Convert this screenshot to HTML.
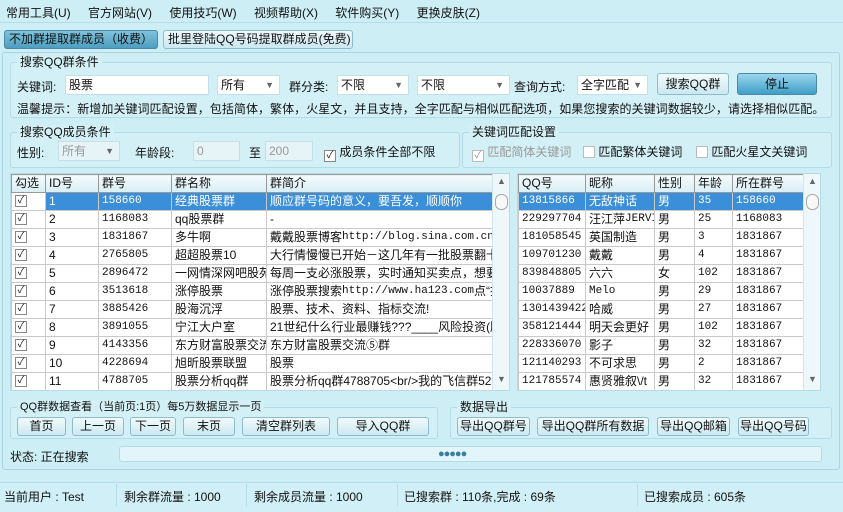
<!DOCTYPE html>
<html><head><meta charset="utf-8"><style>
*{box-sizing:border-box;margin:0;padding:0}
body{width:843px;height:512px;overflow:hidden;background:#cdeef5;font-family:"Liberation Sans","Noto Sans CJK SC",sans-serif;font-size:12px;color:#111;position:relative}
.a{position:absolute;white-space:nowrap}
.grp{position:absolute;border:1px solid #b5dbe6;border-radius:3px;background:#d3f0f6}
.gt{position:absolute;background:#d3f0f6;padding:0 3px;top:-8px;left:6px;line-height:14px}
.inp{position:absolute;background:#fff;border:1px solid #c3e0ea;height:20px;line-height:18px;padding-left:3px}
.sel{position:absolute;background:#fff;border:1px solid #c3e0ea;height:20px;line-height:18px;padding-left:3px}
.sel:after{content:"▼";position:absolute;right:5px;top:0;font-size:9px;color:#666}
.dis{background:#e6f4f8;color:#999}
.btn{position:absolute;border:1px solid #8fbccb;border-radius:3px;background:linear-gradient(#f2fbfd,#cbe8f0);text-align:center;height:19px;line-height:17px}
.cb{display:inline-block;width:12px;height:12px;border:1px solid #888;background:#fff;color:#111;font-size:10px;line-height:10px;text-align:center;vertical-align:-2px}
table{border-collapse:collapse;background:#fff;table-layout:fixed}
tr{height:18px}
td,th{border:1px solid #c9c9c9;height:18px;padding:0 0 0 3px;font-weight:normal;text-align:left;overflow:hidden;white-space:nowrap;font-size:12px;vertical-align:top}
td>div,th>div{height:16px;line-height:16px;overflow:hidden}
td span{vertical-align:top}
td .cb{margin-top:2px;vertical-align:top}
th{background:linear-gradient(#f4fbfd,#d8eef5);border-color:#999}
tr.s td{background:#3a8fd8;color:#fff}
tr.s td:first-child{background:#fff}
.m{font-family:"Liberation Mono","Noto Sans CJK SC",monospace;font-size:11px}
.sb{position:absolute;background:#eef8fb;border-left:1px solid #d0e6ee}
</style></head><body>
<div class="a" style="left:6px;top:4px;word-spacing:14px">常用工具(U) 官方网站(V) 使用技巧(W) 视频帮助(X) 软件购买(Y) 更换皮肤(Z)</div>
<div class="a" style="left:0;top:22px;width:843px;border-top:1px solid #b8dde8"></div>
<div class="a" style="left:4px;top:30px;width:154px;height:19px;border:1px solid #4a88a5;border-radius:3px;background:linear-gradient(#7fc3dd,#4c9ec0);line-height:17px;padding-left:4px">不加群提取群成员（收费）</div>
<div class="a" style="left:163px;top:30px;width:190px;height:19px;border:1px solid #8fbccb;border-radius:3px;background:linear-gradient(#eef9fc,#cbe8f0);line-height:17px;padding-left:4px">批里登陆QQ号码提取群成员(免费)</div>
<div class="a" style="left:2px;top:52px;width:838px;height:418px;border:1px solid #a9d4e0;border-radius:3px"></div>

<div class="grp" style="left:10px;top:62px;width:822px;height:56px"><span class="gt">搜索QQ群条件</span></div>
<div class="a" style="left:17px;top:78px">关键词:</div>
<div class="inp" style="left:65px;top:75px;width:144px">股票</div>
<div class="sel" style="left:217px;top:75px;width:63px">所有</div>
<div class="a" style="left:289px;top:78px">群分类:</div>
<div class="sel" style="left:337px;top:75px;width:72px">不限</div>
<div class="sel" style="left:417px;top:75px;width:93px">不限</div>
<div class="a" style="left:514px;top:78px">查询方式:</div>
<div class="sel" style="left:577px;top:75px;width:71px">全字匹配</div>
<div class="btn" style="left:657px;top:73px;width:72px;height:22px;line-height:20px">搜索QQ群</div>
<div class="btn" style="left:737px;top:73px;width:80px;height:22px;line-height:20px;background:linear-gradient(#9ad6ec,#3f9ec7);border-color:#4a88a5">停止</div>
<div class="a" style="left:17px;top:100px;letter-spacing:0.05px">温馨提示：新增加关键词匹配设置，包括简体，繁体，火星文，并且支持，全字匹配与相似匹配选项，如果您搜索的关键词数据较少，请选择相似匹配。</div>

<div class="grp" style="left:10px;top:132px;width:450px;height:36px"><span class="gt">搜索QQ成员条件</span></div>
<div class="a" style="left:17px;top:144px">性别:</div>
<div class="sel dis" style="left:58px;top:141px;width:62px">所有</div>
<div class="a" style="left:135px;top:144px">年龄段:</div>
<div class="inp dis" style="left:193px;top:141px;width:47px">0</div>
<div class="a" style="left:249px;top:144px">至</div>
<div class="inp dis" style="left:265px;top:141px;width:48px">200</div>
<div class="a" style="left:324px;top:143px"><span class="cb">✓</span> 成员条件全部不限</div>
<div class="grp" style="left:462px;top:132px;width:370px;height:36px"><span class="gt">关键词匹配设置</span></div>
<div class="a" style="left:472px;top:143px;color:#999"><span class="cb" style="border-color:#bbb;color:#999">✓</span> 匹配简体关键词</div>
<div class="a" style="left:583px;top:143px"><span class="cb" style="border-color:#bbb"></span> 匹配繁体关键词</div>
<div class="a" style="left:696px;top:143px"><span class="cb" style="border-color:#bbb"></span> 匹配火星文关键词</div>

<div class="a" style="left:10px;top:173px;width:500px;height:218px;border:1px solid #b5dbe6;background:#fff;overflow:hidden">
<table style="width:481px">
<colgroup><col style="width:34px"><col style="width:53px"><col style="width:73px"><col style="width:95px"><col style="width:226px"></colgroup>
<tr><th><div>勾选</div></th><th><div>ID号</div></th><th><div>群号</div></th><th><div>群名称</div></th><th><div>群简介</div></th></tr>
<tr class="s"><td><div><span class="cb">✓</span></div></td><td><div>1</div></td><td class="m"><div>158660</div></td><td><div>经典股票群</div></td><td><div>顺应群号码的意义，要吾发，顺顺你</div></td></tr>
<tr><td><div><span class="cb">✓</span></div></td><td><div>2</div></td><td class="m"><div>1168083</div></td><td><div>qq股票群</div></td><td><div>-</div></td></tr>
<tr><td><div><span class="cb">✓</span></div></td><td><div>3</div></td><td class="m"><div>1831867</div></td><td><div>多牛啊</div></td><td><div>戴戴股票博客<span class="m">http://blog.sina.com.cn/d</span></div></td></tr>
<tr><td><div><span class="cb">✓</span></div></td><td><div>4</div></td><td class="m"><div>2765805</div></td><td><div>超超股票10</div></td><td><div>大行情慢慢已开始－这几年有一批股票翻十</div></td></tr>
<tr><td><div><span class="cb">✓</span></div></td><td><div>5</div></td><td class="m"><div>2896472</div></td><td><div>一网情深网吧股苑</div></td><td><div>每周一支必涨股票，实时通知买卖点，想要</div></td></tr>
<tr><td><div><span class="cb">✓</span></div></td><td><div>6</div></td><td class="m"><div>3513618</div></td><td><div>涨停股票</div></td><td><div>涨停股票搜索<span class="m">http://www.ha123.com</span>点“搜</div></td></tr>
<tr><td><div><span class="cb">✓</span></div></td><td><div>7</div></td><td class="m"><div>3885426</div></td><td><div>股海沉浮</div></td><td><div>股票、技术、资料、指标交流!</div></td></tr>
<tr><td><div><span class="cb">✓</span></div></td><td><div>8</div></td><td class="m"><div>3891055</div></td><td><div>宁江大户室</div></td><td><div>21世纪什么行业最赚钱???____风险投资(股</div></td></tr>
<tr><td><div><span class="cb">✓</span></div></td><td><div>9</div></td><td class="m"><div>4143356</div></td><td><div>东方财富股票交流</div></td><td><div>东方财富股票交流⑤群</div></td></tr>
<tr><td><div><span class="cb">✓</span></div></td><td><div>10</div></td><td class="m"><div>4228694</div></td><td><div>旭昕股票联盟</div></td><td><div>股票</div></td></tr>
<tr><td><div><span class="cb">✓</span></div></td><td><div>11</div></td><td class="m"><div>4788705</div></td><td><div>股票分析qq群</div></td><td><div>股票分析qq群4788705&lt;br/&gt;我的飞信群522</div></td></tr>
</table>
<div class="sb" style="left:481px;top:0;width:18px;height:216px"><div style="position:absolute;left:2px;top:20px;width:13px;height:16px;border:1px solid #aaa;border-radius:6px;background:#f8f8f8"></div><span style="position:absolute;left:4px;top:2px;font-size:9px;color:#666">▲</span><span style="position:absolute;left:4px;top:200px;font-size:9px;color:#666">▼</span></div>
</div>

<div class="a" style="left:517px;top:173px;width:304px;height:218px;border:1px solid #b5dbe6;background:#fff;overflow:hidden">
<table style="width:285px">
<colgroup><col style="width:67px"><col style="width:69px"><col style="width:40px"><col style="width:38px"><col style="width:71px"></colgroup>
<tr><th><div>QQ号</div></th><th><div>昵称</div></th><th><div>性别</div></th><th><div>年龄</div></th><th><div>所在群号</div></th></tr>
<tr class="s"><td class="m" style="background:#3a8fd8"><div>13815866</div></td><td><div>无敌神话</div></td><td><div>男</div></td><td class="m"><div>35</div></td><td class="m"><div>158660</div></td></tr>
<tr><td class="m"><div>229297704</div></td><td><div>汪江萍<span class="m">JERVI</span></div></td><td><div>男</div></td><td class="m"><div>25</div></td><td class="m"><div>1168083</div></td></tr>
<tr><td class="m"><div>181058545</div></td><td><div>英国制造</div></td><td><div>男</div></td><td class="m"><div>3</div></td><td class="m"><div>1831867</div></td></tr>
<tr><td class="m"><div>109701230</div></td><td><div>戴戴</div></td><td><div>男</div></td><td class="m"><div>4</div></td><td class="m"><div>1831867</div></td></tr>
<tr><td class="m"><div>839848805</div></td><td><div>六六</div></td><td><div>女</div></td><td class="m"><div>102</div></td><td class="m"><div>1831867</div></td></tr>
<tr><td class="m"><div>10037889</div></td><td class="m"><div>Melo</div></td><td><div>男</div></td><td class="m"><div>29</div></td><td class="m"><div>1831867</div></td></tr>
<tr><td class="m"><div>1301439422</div></td><td><div>哈威</div></td><td><div>男</div></td><td class="m"><div>27</div></td><td class="m"><div>1831867</div></td></tr>
<tr><td class="m"><div>358121444</div></td><td><div>明天会更好</div></td><td><div>男</div></td><td class="m"><div>102</div></td><td class="m"><div>1831867</div></td></tr>
<tr><td class="m"><div>228336070</div></td><td><div>影子</div></td><td><div>男</div></td><td class="m"><div>32</div></td><td class="m"><div>1831867</div></td></tr>
<tr><td class="m"><div>121140293</div></td><td><div>不可求思</div></td><td><div>男</div></td><td class="m"><div>2</div></td><td class="m"><div>1831867</div></td></tr>
<tr><td class="m"><div>121785574</div></td><td><div>惠贤雅叙\/t</div></td><td><div>男</div></td><td class="m"><div>32</div></td><td class="m"><div>1831867</div></td></tr>
</table>
<div class="sb" style="left:285px;top:0;width:18px;height:216px"><div style="position:absolute;left:2px;top:20px;width:13px;height:16px;border:1px solid #aaa;border-radius:6px;background:#f8f8f8"></div><span style="position:absolute;left:4px;top:2px;font-size:9px;color:#666">▲</span><span style="position:absolute;left:4px;top:200px;font-size:9px;color:#666">▼</span></div>
</div>

<div class="grp" style="left:10px;top:407px;width:428px;height:32px"><span class="gt" style="font-size:11px">QQ群数据查看（当前页:1页）每5万数据显示一页</span></div>
<div class="btn" style="left:17px;top:417px;width:49px">首页</div>
<div class="btn" style="left:72px;top:417px;width:52px">上一页</div>
<div class="btn" style="left:130px;top:417px;width:46px">下一页</div>
<div class="btn" style="left:183px;top:417px;width:52px">末页</div>
<div class="btn" style="left:242px;top:417px;width:88px">清空群列表</div>
<div class="btn" style="left:337px;top:417px;width:92px">导入QQ群</div>
<div class="grp" style="left:450px;top:407px;width:382px;height:32px"><span class="gt">数据导出</span></div>
<div class="btn" style="left:457px;top:417px;width:73px">导出QQ群号</div>
<div class="btn" style="left:537px;top:417px;width:112px">导出QQ群所有数据</div>
<div class="btn" style="left:657px;top:417px;width:73px">导出QQ邮箱</div>
<div class="btn" style="left:738px;top:417px;width:71px">导出QQ号码</div>

<div class="a" style="left:10px;top:448px">状态: 正在搜索</div>
<div class="a" style="left:119px;top:446px;width:703px;height:16px;border:1px solid #b5dbe6;border-radius:3px;background:#e2f5fa"></div>
<div class="a" style="left:438px;top:448px;letter-spacing:-1px;color:#3a7fa0;font-size:11px">●●●●●</div>

<div class="a" style="left:0;top:482px;width:843px;height:30px;border-top:1px solid #b5dbe6;background:#d0eff6"></div>
<div class="a" style="left:4px;top:488px">当前用户 : Test</div>
<div class="a" style="left:116px;top:484px;height:22px;border-left:1px solid #b5dbe6"></div>
<div class="a" style="left:124px;top:488px">剩余群流量 : 1000</div>
<div class="a" style="left:246px;top:484px;height:22px;border-left:1px solid #b5dbe6"></div>
<div class="a" style="left:254px;top:488px">剩余成员流量 : 1000</div>
<div class="a" style="left:397px;top:484px;height:22px;border-left:1px solid #b5dbe6"></div>
<div class="a" style="left:404px;top:488px">已搜索群 : 110条,完成 : 69条</div>
<div class="a" style="left:637px;top:484px;height:22px;border-left:1px solid #b5dbe6"></div>
<div class="a" style="left:644px;top:488px">已搜索成员 : 605条</div>
</body></html>
